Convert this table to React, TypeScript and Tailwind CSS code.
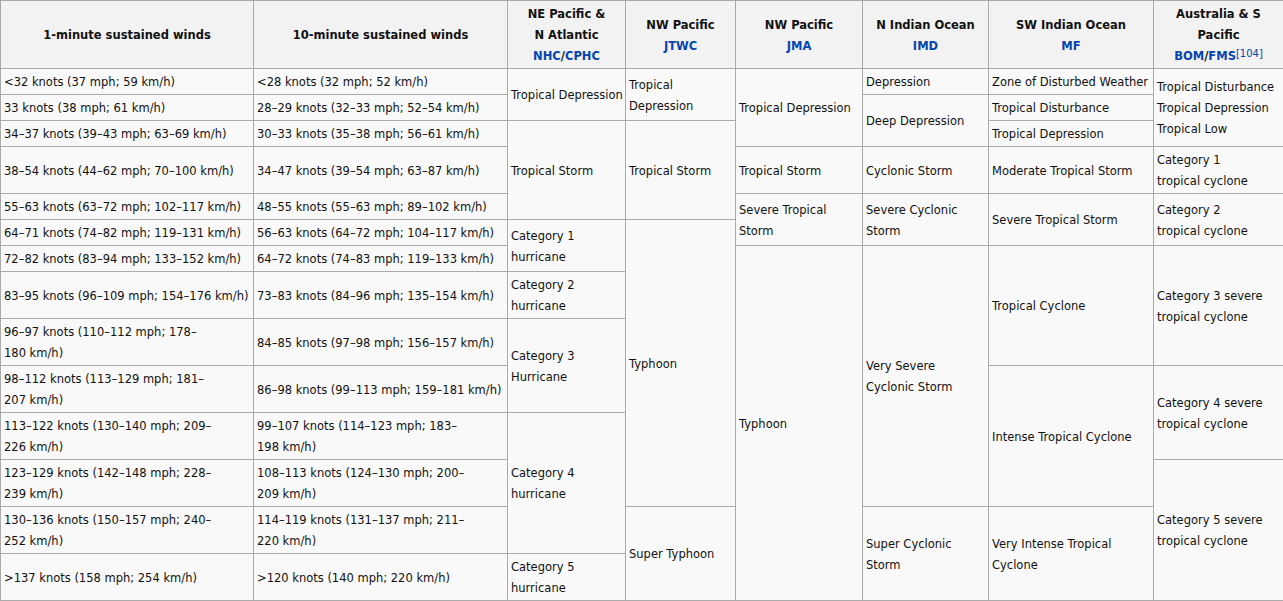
import React from "react";

const L = ({ children }: { children: React.ReactNode }) => (
  <span className="text-[#0645ad]">{children}</span>
);

const Th = ({ children }: { children: React.ReactNode }) => (
  <th className="border border-[#aaaaaa] bg-[#f2f2f2] px-[3px] pt-[3px] pb-[1px] text-center align-middle font-bold leading-[21px]">
    {children}
  </th>
);

type CellProps = { children: React.ReactNode; rs?: number };
const Td = ({ children, rs }: CellProps) => (
  <td
    rowSpan={rs}
    className="border border-[#aaaaaa] bg-[#f9f9f9] px-[3px] pt-[3px] pb-[1px] align-middle leading-[21px] whitespace-nowrap overflow-hidden"
  >
    {children}
  </td>
);

const br = <br />;

export default function App() {
  return (
    <div className="w-[1283px] bg-white">
      <table
        className="table-fixed border-collapse w-[1283px] text-[11.5px] text-[#111]"
        style={{ fontFamily: '"DejaVu Sans", Verdana, sans-serif' }}
      >
        <colgroup>
          <col className="w-[253px]" />
          <col className="w-[254px]" />
          <col className="w-[118px]" />
          <col className="w-[110px]" />
          <col className="w-[127px]" />
          <col className="w-[126px]" />
          <col className="w-[165px]" />
          <col className="w-[130px]" />
        </colgroup>
        <thead>
          <tr>
            <Th>1-minute sustained winds</Th>
            <Th>10-minute sustained winds</Th>
            <Th>
              NE Pacific &amp;
              <br />N Atlantic
              <br />
              <L>NHC</L>/<L>CPHC</L>
            </Th>
            <Th>
              NW Pacific
              <br />
              <L>JTWC</L>
            </Th>
            <Th>
              NW Pacific
              <br />
              <L>JMA</L>
            </Th>
            <Th>
              N Indian Ocean
              <br />
              <L>IMD</L>
            </Th>
            <Th>
              SW Indian Ocean
              <br />
              <L>MF</L>
            </Th>
            <Th>
              Australia &amp; S
              <br />
              Pacific
              <br />
              <L>BOM</L>/<L>FMS</L>
              <sup className="font-normal text-[#0645ad] leading-none text-[10px] relative -top-[3px] align-baseline">
                [104]
              </sup>
            </Th>
          </tr>
        </thead>
        <tbody>
          <tr>
            <Td>&lt;32 knots (37 mph; 59 km/h)</Td>
            <Td>&lt;28 knots (32 mph; 52 km/h)</Td>
            <Td rs={2}>Tropical Depression</Td>
            <Td rs={2}>Tropical{br}Depression</Td>
            <Td rs={3}>Tropical Depression</Td>
            <Td>Depression</Td>
            <Td>Zone of Disturbed Weather</Td>
            <Td rs={3}>
              Tropical Disturbance{br}Tropical Depression{br}Tropical Low
            </Td>
          </tr>
          <tr>
            <Td>33 knots (38 mph; 61 km/h)</Td>
            <Td>28–29 knots (32–33 mph; 52–54 km/h)</Td>
            <Td rs={2}>Deep Depression</Td>
            <Td>Tropical Disturbance</Td>
          </tr>
          <tr>
            <Td>34–37 knots (39–43 mph; 63–69 km/h)</Td>
            <Td>30–33 knots (35–38 mph; 56–61 km/h)</Td>
            <Td rs={3}>Tropical Storm</Td>
            <Td rs={3}>Tropical Storm</Td>
            <Td>Tropical Depression</Td>
          </tr>
          <tr>
            <Td>38–54 knots (44–62 mph; 70–100 km/h)</Td>
            <Td>34–47 knots (39–54 mph; 63–87 km/h)</Td>
            <Td>Tropical Storm</Td>
            <Td>Cyclonic Storm</Td>
            <Td>Moderate Tropical Storm</Td>
            <Td>Category 1{br}tropical cyclone</Td>
          </tr>
          <tr>
            <Td>55–63 knots (63–72 mph; 102–117 km/h)</Td>
            <Td>48–55 knots (55–63 mph; 89–102 km/h)</Td>
            <Td rs={2}>Severe Tropical{br}Storm</Td>
            <Td rs={2}>Severe Cyclonic{br}Storm</Td>
            <Td rs={2}>Severe Tropical Storm</Td>
            <Td rs={2}>Category 2{br}tropical cyclone</Td>
          </tr>
          <tr>
            <Td>64–71 knots (74–82 mph; 119–131 km/h)</Td>
            <Td>56–63 knots (64–72 mph; 104–117 km/h)</Td>
            <Td rs={2}>Category 1{br}hurricane</Td>
            <Td rs={7}>Typhoon</Td>
          </tr>
          <tr>
            <Td>72–82 knots (83–94 mph; 133–152 km/h)</Td>
            <Td>64–72 knots (74–83 mph; 119–133 km/h)</Td>
            <Td rs={8}>Typhoon</Td>
            <Td rs={6}>Very Severe{br}Cyclonic Storm</Td>
            <Td rs={3}>Tropical Cyclone</Td>
            <Td rs={3}>Category 3 severe{br}tropical cyclone</Td>
          </tr>
          <tr>
            <Td>83–95 knots (96–109 mph; 154–176 km/h)</Td>
            <Td>73–83 knots (84–96 mph; 135–154 km/h)</Td>
            <Td>Category 2{br}hurricane</Td>
          </tr>
          <tr>
            <Td>96–97 knots (110–112 mph; 178–{br}180 km/h)</Td>
            <Td>84–85 knots (97–98 mph; 156–157 km/h)</Td>
            <Td rs={2}>Category 3{br}Hurricane</Td>
          </tr>
          <tr>
            <Td>98–112 knots (113–129 mph; 181–{br}207 km/h)</Td>
            <Td>86–98 knots (99–113 mph; 159–181 km/h)</Td>
            <Td rs={3}>Intense Tropical Cyclone</Td>
            <Td rs={2}>Category 4 severe{br}tropical cyclone</Td>
          </tr>
          <tr>
            <Td>113–122 knots (130–140 mph; 209–{br}226 km/h)</Td>
            <Td>99–107 knots (114–123 mph; 183–{br}198 km/h)</Td>
            <Td rs={3}>Category 4{br}hurricane</Td>
          </tr>
          <tr>
            <Td>123–129 knots (142–148 mph; 228–{br}239 km/h)</Td>
            <Td>108–113 knots (124–130 mph; 200–{br}209 km/h)</Td>
            <Td rs={3}>Category 5 severe{br}tropical cyclone</Td>
          </tr>
          <tr>
            <Td>130–136 knots (150–157 mph; 240–{br}252 km/h)</Td>
            <Td>114–119 knots (131–137 mph; 211–{br}220 km/h)</Td>
            <Td rs={2}>Super Typhoon</Td>
            <Td rs={2}>Super Cyclonic{br}Storm</Td>
            <Td rs={2}>Very Intense Tropical{br}Cyclone</Td>
          </tr>
          <tr>
            <Td>&gt;137 knots (158 mph; 254 km/h)</Td>
            <Td>&gt;120 knots (140 mph; 220 km/h)</Td>
            <Td>Category 5{br}hurricane</Td>
          </tr>
        </tbody>
      </table>
    </div>
  );
}
